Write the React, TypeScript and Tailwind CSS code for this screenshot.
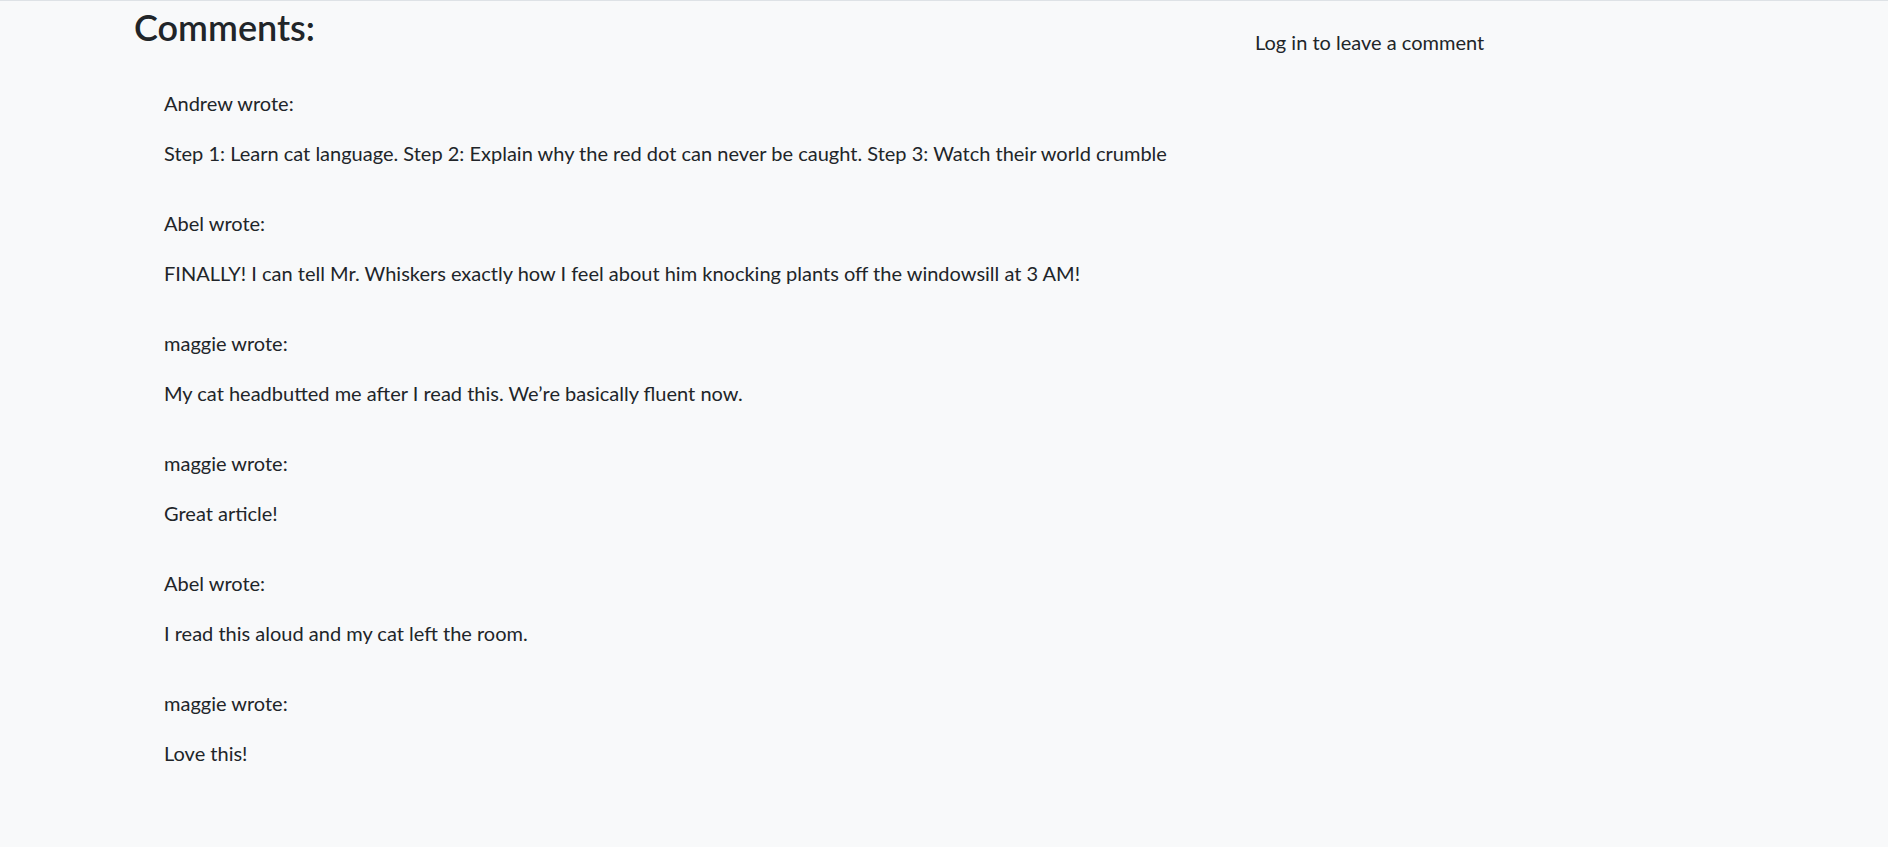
import React from 'react'

const comments = [
  {
    author: 'Andrew',
    text: 'Step 1: Learn cat language. Step 2: Explain why the red dot can never be caught. Step 3: Watch their world crumble',
  },
  {
    author: 'Abel',
    text: 'FINALLY! I can tell Mr. Whiskers exactly how I feel about him knocking plants off the windowsill at 3 AM!',
  },
  { author: 'maggie', text: 'My cat headbutted me after I read this. We\u2019re basically fluent now.' },
  { author: 'maggie', text: 'Great article!' },
  { author: 'Abel', text: 'I read this aloud and my cat left the room.' },
  { author: 'maggie', text: 'Love this!' },
]

const App: React.FC = () => {
  return (
    <div className="min-h-screen bg-[#f8f9fa] border-t border-[#dee2e6] text-[#212529] font-['Segoe_UI',Lato,sans-serif] text-[20px] leading-[30px]">
      <div className="w-[1650px] mx-auto px-[15px] flex">
        <div className="w-[1085px]">
          <h3 className="text-[36px] leading-[42px] font-semibold mt-[5px] mb-[9px]">Comments:</h3>
          <div className="pl-[30px] pt-[31px]">
            {comments.map((c, i) => (
              <div key={i} className="pb-[20px]">
                <p className="mb-[20px]">{c.author} wrote:</p>
                <p className="mb-[20px]">{c.text}</p>
              </div>
            ))}
          </div>
        </div>
        <div className="pl-[36px] pt-[26px]">
          <p>Log in to leave a comment</p>
        </div>
      </div>
    </div>
  )
}

export default App
